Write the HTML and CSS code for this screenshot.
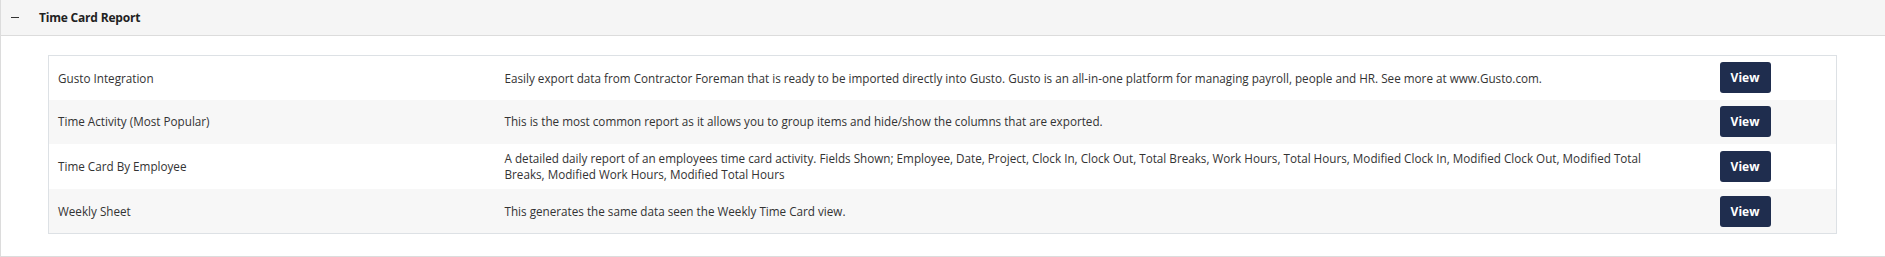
FILE: index.html
```html
<!DOCTYPE html>
<html>
<head>
<meta charset="utf-8">
<title>Time Card Report</title>
<link rel="stylesheet" href="styles.css">
</head>
<body>
<div class="panel">
    <div class="panel-head">
        <span class="toggle"></span>
        <span class="panel-title">Time Card Report</span>
    </div>
    <div class="panel-body">
        <table class="report-list">
            <colgroup>
                <col class="col-name">
                <col>
                <col class="col-action">
            </colgroup>
            <tr>
                <td>Gusto Integration</td>
                <td>Easily export data from Contractor Foreman that is ready to be imported directly into Gusto. Gusto is an all-in-one platform for managing payroll, people and HR. See more at www.Gusto.com.</td>
                <td><button class="btn-view">View</button></td>
            </tr>
            <tr>
                <td>Time Activity (Most Popular)</td>
                <td>This is the most common report as it allows you to group items and hide/show the columns that are exported.</td>
                <td><button class="btn-view">View</button></td>
            </tr>
            <tr>
                <td>Time Card By Employee</td>
                <td>A detailed daily report of an employees time card activity. Fields Shown; Employee, Date, Project, Clock In, Clock Out, Total Breaks, Work Hours, Total Hours, Modified Clock In, Modified Clock Out, Modified Total Breaks, Modified Work Hours, Modified Total Hours</td>
                <td><button class="btn-view">View</button></td>
            </tr>
            <tr>
                <td>Weekly Sheet</td>
                <td>This generates the same data seen the Weekly Time Card view.</td>
                <td><button class="btn-view">View</button></td>
            </tr>
        </table>
    </div>
</div>
</body>
</html>
```

FILE: styles.css
```css
/* page */
body {
    margin: 0;
    font-family: 'Open Sans', 'Liberation Sans', sans-serif;
    color: #333;
    background: #fff;
}

/* collapsible panel */
.panel {
    border-left: 1px solid #dcdcdc;
    border-bottom: 1px solid #dcdcdc;
}

.panel-head {
    display: flex;
    align-items: center;
    height: 35px;
    padding-left: 10px;
    background: #f5f5f5;
    border-bottom: 1px solid #dcdcdc;
}

.toggle {
    display: inline-block;
    width: 8px;
    height: 1px;
    background: #333;
    margin-right: 20px;
}

.panel-title {
    font-size: 12px;
    font-weight: 700;
    letter-spacing: -0.2px;
    color: #222;
}

.panel-body {
    padding: 19px 48px 22px 47px;
}

/* report table */
.report-list {
    width: 100%;
    border-collapse: collapse;
    border: 1px solid #dde1e5;
    font-size: 11.7px;
    line-height: 16.5px;
}

.report-list .col-name {
    width: 446px;
}

.report-list .col-action {
    width: 127px;
}

.report-list td {
    padding: 6.4px 10px;
    vertical-align: middle;
}

.report-list td:first-child {
    padding-left: 9px;
}

.report-list td:nth-child(2) {
    padding-right: 40px;
}

.report-list tr:nth-child(even) {
    background: #f7f7f7;
}

.btn-view {
    display: block;
    width: 51px;
    height: 31px;
    padding: 0;
    border: none;
    border-radius: 3px;
    background: #1f2d4e;
    color: #fff;
    font-family: inherit;
    font-size: 12px;
    font-weight: 700;
    cursor: pointer;
}
```
